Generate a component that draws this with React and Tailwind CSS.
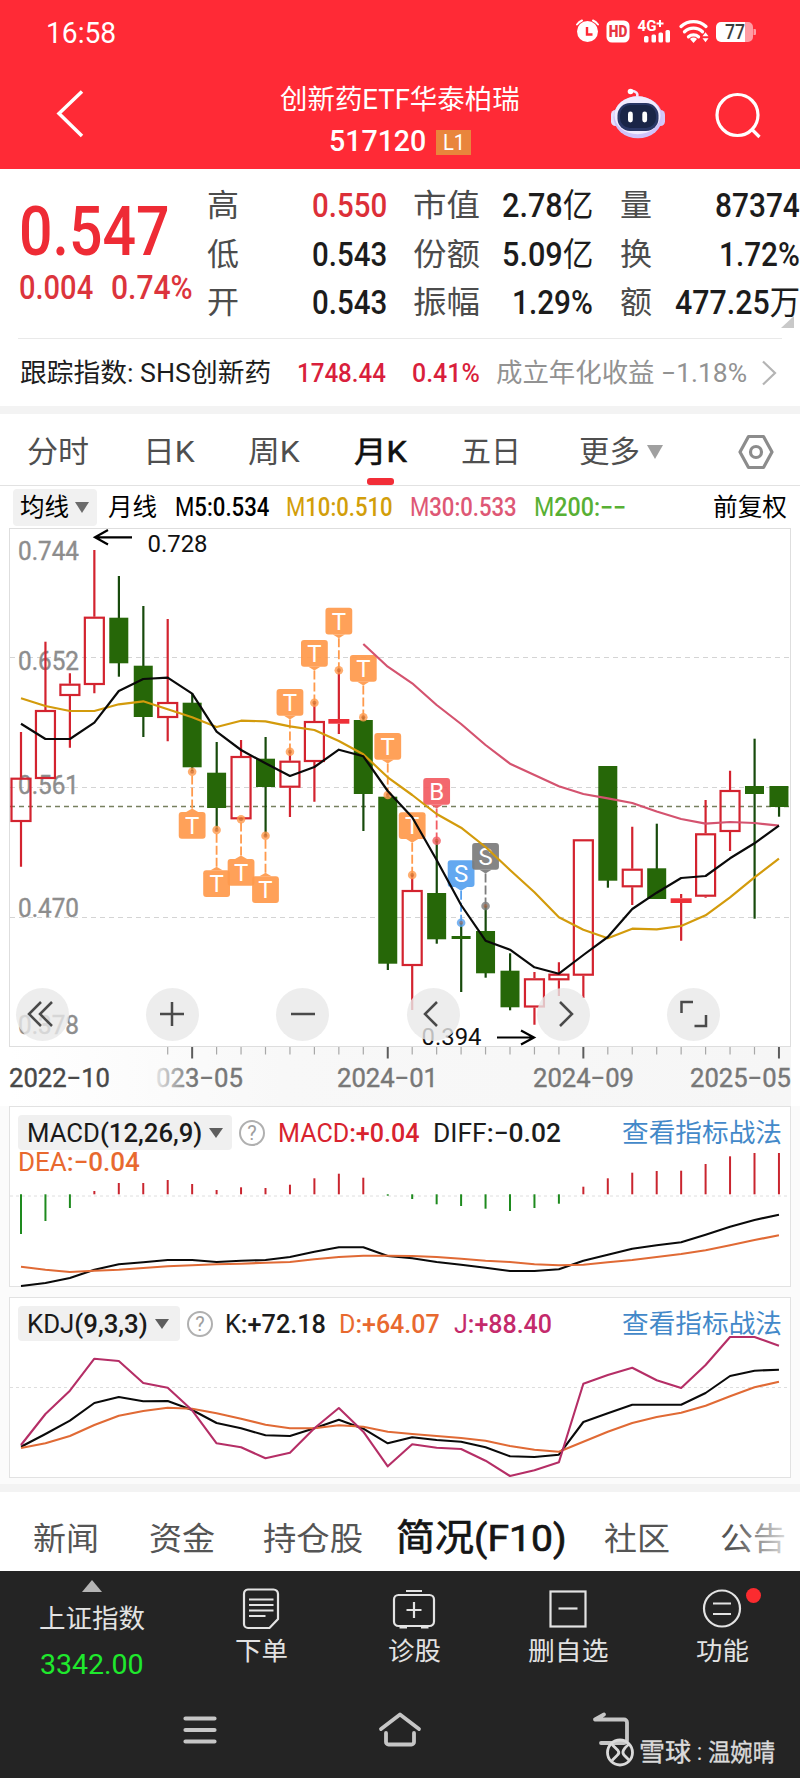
import { useLayoutEffect, useRef, useState } from "react";

const STEP = 24.45;
const xAt = (i) => 21 + i * STEP;

const RED = "#d3232f";
const GREEN = "#266708";

// [up, high, bodyTop, bodyBottom, low]
const CANDLES = [
  [1, 732, 777.7, 822, 866.7],
  [1, 641.7, 710, 779, 779],
  [1, 673.3, 683.7, 696, 747.7],
  [1, 550, 616.7, 685, 693.3],
  [0, 576, 617.7, 663.3, 676.7],
  [0, 606, 665.7, 717, 737],
  [1, 619, 702, 718, 741.3],
  [0, 693.3, 702.7, 767.3, 771],
  [0, 742, 772.7, 808, 829.3],
  [1, 740, 756, 819.3, 819.3],
  [0, 737, 758.7, 787, 835.7],
  [1, 751.7, 760.7, 787.7, 817],
  [1, 702.7, 721, 762, 801.7],
  [1, 670.3, 719, 723.7, 734],
  [0, 716.7, 720, 794, 831],
  [0, 796.7, 796.7, 963.7, 970],
  [1, 875, 890, 966, 1010],
  [0, 841, 893, 939.3, 943.7],
  [0, 922.7, 936, 939, 992],
  [0, 906, 931, 973.3, 977.7],
  [0, 953.3, 970.7, 1007.3, 1010.3],
  [1, 972, 978.3, 1007.5, 1024.7],
  [1, 962.3, 973.7, 980.3, 996],
  [1, 839.3, 839.3, 975.7, 998],
  [0, 766, 766, 880.7, 887.7],
  [1, 826.7, 868.7, 887.3, 905],
  [0, 823.7, 868.3, 899, 899],
  [1, 894, 898.3, 903, 940.7],
  [1, 800, 833.3, 896.7, 897.7],
  [1, 770.7, 790, 832, 851],
  [0, 738.7, 786, 794, 918.7],
  [0, 786, 786, 807, 816.7],
];

const MA5 = [723.7, 739, 739, 722.7, 691, 679, 677.7, 693.7, 731.7, 750, 763.3, 776, 767, 749.7, 756.3, 791, 817.3, 860, 905, 940.7, 949.7, 967.3, 973.7, 955, 937, 909, 892.7, 878, 876, 858.3, 843.3, 825.7];
const MA10 = [698.3, 706, 711, 711, 704.3, 701.3, 709.3, 717.3, 727, 720.7, 721.3, 726.3, 730, 741, 754.3, 777.3, 795, 814, 827.7, 847, 870, 892.3, 917.3, 929.7, 938.3, 928.7, 929.3, 926, 915.3, 897.3, 877.3, 858.7];
const MA30 = [644, 666.7, 683.3, 705, 724, 745, 763.7, 775, 786.3, 794, 798.3, 803, 811.5, 819, 823.7, 822, 823, 825.7];

const MACD_BARS = [1234, 1221, 1208, 1191, 1183, 1183, 1180, 1184, 1190, 1187.3, 1188, 1184.7, 1178.3, 1173.7, 1177.7, 1195.7, 1199, 1204.3, 1206, 1208.7, 1211, 1208, 1203.7, 1186.7, 1178.3, 1172.7, 1171, 1170.7, 1164, 1156.3, 1153, 1153];
const DIFF = [1286, 1283, 1278, 1269.7, 1264.3, 1262.3, 1260, 1260, 1262, 1260.7, 1260, 1257, 1251.7, 1247.3, 1247.3, 1256, 1258.3, 1262, 1264.7, 1267.7, 1271, 1271, 1269.3, 1260.7, 1254.7, 1248.7, 1245.3, 1242.3, 1234.7, 1226.7, 1220, 1214.7];
const DEA = [1266.7, 1269.7, 1272, 1270.7, 1269.7, 1268, 1266.3, 1265.3, 1264.3, 1263.7, 1262.7, 1262, 1259.3, 1257, 1255.7, 1255.7, 1256, 1257, 1258.7, 1260.7, 1262, 1264.3, 1265.3, 1264.7, 1262.3, 1260, 1257, 1254, 1250.3, 1245.3, 1240, 1235.3];

const K = [1446.7, 1434, 1420.7, 1403, 1397, 1401.3, 1401, 1410, 1423, 1428.3, 1435.3, 1436, 1428.3, 1419.7, 1428.7, 1443.3, 1437.3, 1440, 1441.7, 1447.3, 1456.3, 1457, 1454.7, 1422, 1413.3, 1404.7, 1404.7, 1404.7, 1393, 1376, 1370.7, 1369.7];
const D = [1448, 1443.3, 1436, 1425, 1415.7, 1411, 1407.7, 1408.7, 1413.3, 1418.7, 1424.7, 1428.3, 1428.3, 1425.3, 1426.7, 1431.7, 1434, 1436, 1438, 1440.7, 1446, 1449.7, 1451.7, 1441.7, 1431.7, 1423, 1417, 1412.7, 1405.7, 1396.3, 1387.3, 1381.7];
const J = [1445, 1414, 1390.7, 1358.7, 1361, 1383, 1387.7, 1410.3, 1443.3, 1447.3, 1458.3, 1452.7, 1428.3, 1408, 1431.7, 1466.3, 1444.3, 1447.7, 1449, 1460.7, 1476, 1470.3, 1462.3, 1383.7, 1375, 1367.7, 1380.3, 1388, 1365, 1337, 1337, 1345.7];

// [index, letter, boxTop, dotY, color]
const MARKERS = [
  [7, "T", 812, 771.7, "#ff9a4c"],
  [8, "T", 870.3, 830, "#ff9a4c"],
  [9, "T", 859, 819.3, "#ff9a4c"],
  [10, "T", 876.3, 835.7, "#ff9a4c"],
  [11, "T", 689, 751.7, "#ff9a4c"],
  [12, "T", 640, 702.7, "#ff9a4c"],
  [13, "T", 607.7, 670.3, "#ff9a4c"],
  [14, "T", 655, 717.3, "#ff9a4c"],
  [15, "T", 733, 795, "#ff9a4c"],
  [16, "T", 812.3, 875, "#ff9a4c"],
  [17, "B", 778, 840.7, "#f25c63"],
  [18, "S", 860.3, 922.7, "#57a1ef"],
  [19, "S", 843, 906, "#7c7c7c"],
];

const points = (values, start = 0) => values.map((y, i) => `${xAt(i + start)},${y}`).join(" ");

/** Squeezes or stretches one line of text to the width of its box */
function FitText({ className = "", children }) {
  const outer = useRef(null);
  const inner = useRef(null);
  const [scale, setScale] = useState(1);

  useLayoutEffect(() => {
    setScale(outer.current.clientWidth / inner.current.offsetWidth);
  }, [children]);

  return (
    <span ref={outer} className={`inline-flex shrink-0 items-center whitespace-nowrap leading-none ${className}`}>
      <span ref={inner} className="block shrink-0 origin-left" style={{ transform: `scaleX(${scale})` }}>
        {children}
      </span>
    </span>
  );
}

/** Light name followed by a heavier number, e.g. "M5" + ":0.534" */
function Reading({ name, value, className }) {
  return (
    <FitText className={className}>
      {name}
      <span className="font-medium">{value}</span>
    </FitText>
  );
}

function StatusIcons() {
  return (
    <svg className="absolute left-[570px] top-[14px]" width="190" height="34" viewBox="570 14 190 34">
      <g fill="#fff">
        <circle cx="587.5" cy="31.5" r="10.5" />
        <path d="M577 24.5a13 13 0 0 1 5-4M593 20.500a13 13 0 0 1 5 4" stroke="#fff" strokeWidth="2" fill="none" strokeLinecap="round" />
        <path d="M587 27v7.500h5.500" stroke="#ff2a36" strokeWidth="2.400" fill="none" />
        <rect x="606.500" y="20.500" width="23" height="22" rx="5.500" />
        <text x="608.800" y="37.300" textLength="18.500" lengthAdjust="spacingAndGlyphs" fontFamily="Roboto" fontWeight="900" fontSize="16" fill="#e8343f">HD</text>
        <text x="637.500" y="31" textLength="19" lengthAdjust="spacingAndGlyphs" fontFamily="Roboto" fontWeight="700" fontSize="15">4G</text>
        <path d="M660 20v7M656.500 23.500h7" stroke="#fff" strokeWidth="2" />
        <rect x="644" y="36" width="4.500" height="6.500" rx="1.500" />
        <rect x="651.500" y="34.500" width="4.500" height="8" rx="1.500" />
        <rect x="658.500" y="32.500" width="4.500" height="10" rx="1.500" />
        <rect x="665.500" y="30" width="4.500" height="12.500" rx="1.500" />
      </g>
      <g fill="none" stroke="#fff" strokeWidth="3.300" strokeLinecap="round">
        <path d="M681 26.500a18.500 18.500 0 0 1 25 0" />
        <path d="M684.500 31.800a13 13 0 0 1 18 0" />
        <path d="M688.500 36.800a7.500 7.500 0 0 1 10 0" />
      </g>
      <path d="M690 39l3.500 4 3.500-4a5 5 0 0 0-7 0z" fill="#fff" />
      <path d="M702.500 36.300l3-4 3 4zM702.500 38.200l3 4 3-4z" fill="#fff" />
      <path d="M744 22h4a5 5 0 0 1 5 5v10a5 5 0 0 1-5 5h-4zM753.500 29h1.500a1 1 0 0 1 1 1v4a1 1 0 0 1-1 1h-1.500z" fill="#ff9ba3" />
      <path d="M721 22h24v20h-24a5 5 0 0 1-5-5v-10a5 5 0 0 1 5-5z" fill="#fff" />
      <text x="725" y="39" textLength="20" lengthAdjust="spacingAndGlyphs" fontFamily="Roboto" fontWeight="500" fontSize="19.500" fill="#3c3c3c">77</text>
    </svg>
  );
}

function Robot() {
  return (
    <svg width="56" height="52" viewBox="610 88 56 52">
      <path d="M637 97c1.500-4-1-5.500-6-6.500" stroke="#f3e9ff" strokeWidth="2.500" fill="none" />
      <circle cx="630.500" cy="91.500" r="2.800" fill="#fff" />
      <rect x="611" y="110" width="9" height="16" rx="4.500" fill="#e6dffc" />
      <rect x="656" y="110" width="9" height="16" rx="4.500" fill="#d3c9f9" />
      <ellipse cx="638" cy="117.300" rx="24.500" ry="21" fill="#cfc3fa" />
      <ellipse cx="637.500" cy="115.300" rx="23" ry="19" fill="#f1ecff" />
      <rect x="617.500" y="103" width="41" height="28" rx="12.500" fill="#2a3766" />
      <rect x="620" y="105" width="36" height="23" rx="10" fill="#1a2547" />
      <rect x="628" y="111.500" width="4.800" height="11" rx="2.400" fill="#fff" />
      <rect x="642.300" y="111.500" width="4.800" height="11" rx="2.400" fill="#fff" />
    </svg>
  );
}

function Header() {
  return (
    <header className="relative h-[169px] bg-[#ff2a36] text-white">
      <div className="flex h-[66px] items-center pl-[46px]">
        <FitText className="w-[70px] text-[29px]">16:58</FitText>
        <StatusIcons />
      </div>
      <div className="flex h-[103px] items-start">
        <svg className="ml-[54px] mt-[22px]" width="32" height="52" viewBox="54 88 32 52">
          <path d="M82 91.500L59 113.500L82 136" stroke="#fff" strokeWidth="3.500" fill="none" />
        </svg>
        <div className="ml-[194px] mt-[17px] flex w-[240px] flex-col items-center">
          <FitText className="h-[34px] w-[240px] text-[27px]">创新药ETF华泰柏瑞</FitText>
          <div className="mt-[12px] flex items-center gap-[10px]">
            <FitText className="-mt-[3px] w-[97px] text-[30px] font-medium">517120</FitText>
            <span className="flex h-[25px] w-[35px] items-center justify-center bg-[#e9853c]">
              <FitText className="w-[22px] text-[22px]">L1</FitText>
            </span>
          </div>
        </div>
        <div className="ml-[90px] mt-[22px]">
          <Robot />
        </div>
        <svg className="ml-[45px] mt-[24px]" width="52" height="52" viewBox="710 90 52 52">
          <circle cx="736.500" cy="115" r="20.500" stroke="#fff" strokeWidth="3.200" fill="none" />
          <path d="M750.500 129l8 8" stroke="#fff" strokeWidth="3.200" />
        </svg>
      </div>
    </header>
  );
}

function QuoteRow({ label, labelClass, value, unit, valueClass }) {
  return (
    <div className="flex h-[48.5px] items-center justify-between">
      <FitText className={`text-[31px] text-[#4c4c4c] ${labelClass}`}>{label}</FitText>
      <FitText className={`text-[33px] font-medium ${valueClass}`}>
        {value}
        {unit && <span className="font-normal">{unit}</span>}
      </FitText>
    </div>
  );
}

function Quote() {
  return (
    <section className="bg-white text-[#1c1c1c]">
      <div className="relative flex h-[169px] items-start pt-[12px]">
        <div className="flex w-[207px] flex-col pl-[19px] pt-[17px]">
          <FitText className="h-[68px] w-[151px] text-[68px] font-medium text-[#ee2b35]">0.547</FitText>
          <div className="mt-[5px] flex gap-[18px] text-[33px] font-medium text-[#dc343c]">
            <FitText className="w-[74px]">0.004</FitText>
            <FitText className="w-[82px]">0.74%</FitText>
          </div>
        </div>
        <div className="w-[180px] pt-[0.5px]">
          <QuoteRow label="高" labelClass="w-[32px]" value="0.550" valueClass="w-[75px] text-[#dc2f38]" />
          <QuoteRow label="低" labelClass="w-[32px]" value="0.543" valueClass="w-[75px]" />
          <QuoteRow label="开" labelClass="w-[32px]" value="0.543" valueClass="w-[75px]" />
        </div>
        <div className="ml-[26px] w-[180px] pt-[0.5px]">
          <QuoteRow label="市值" labelClass="w-[67px]" value="2.78" unit="亿" valueClass="w-[91px]" />
          <QuoteRow label="份额" labelClass="w-[67px]" value="5.09" unit="亿" valueClass="w-[91px]" />
          <QuoteRow label="振幅" labelClass="w-[67px]" value="1.29%" valueClass="w-[81px]" />
        </div>
        <div className="ml-[27px] w-[180px] pt-[0.5px]">
          <QuoteRow label="量" labelClass="w-[32px]" value="87374" valueClass="w-[85px]" />
          <QuoteRow label="换" labelClass="w-[32px]" value="1.72%" valueClass="w-[81px]" />
          <QuoteRow label="额" labelClass="w-[32px]" value="477.25" unit="万" valueClass="w-[125px]" />
        </div>
        <svg className="absolute bottom-[10px] right-[6px]" width="13" height="12" viewBox="0 0 13 12">
          <path d="M13 0V12H0z" fill="#c9c9c9" />
        </svg>
      </div>
      <div className="ml-[18px] mr-[18px] border-t border-[#e9e9e9]" />
      <div className="flex h-[67px] items-center pl-[20px] text-[26px]">
        <FitText className="w-[251px]">跟踪指数: SHS创新药</FitText>
        <FitText className="ml-[26px] w-[89px] font-medium text-[#d91f3c]">1748.44</FitText>
        <FitText className="ml-[26px] w-[68px] font-medium text-[#d91f3c]">0.41%</FitText>
        <FitText className="ml-[16px] w-[251px] text-[#929292]">成立年化收益 −1.18%</FitText>
        <svg className="ml-[14px]" width="18" height="26" viewBox="0 0 18 26">
          <path d="M2 1.500L14 13L2 24.500" stroke="#b4b4b4" strokeWidth="2.200" fill="none" />
        </svg>
      </div>
      <div className="h-[8px] bg-[#f3f3f3]" />
    </section>
  );
}

function PeriodTabs() {
  return (
    <nav className="relative flex h-[72px] items-center border-b border-[#e2e2e2] bg-white pl-[27px] pt-[4px] text-[30px] text-[#4f4f4f]">
      <FitText className="w-[62px]">分时</FitText>
      <FitText className="ml-[54px] w-[52px]">日K</FitText>
      <FitText className="ml-[53px] w-[52px]">周K</FitText>
      <FitText className="ml-[54px] w-[53px] text-[#111] [-webkit-text-stroke:0.6px]">月K</FitText>
      <FitText className="ml-[54px] w-[60px]">五日</FitText>
      <FitText className="ml-[58px] w-[61px]">更多</FitText>
      <svg className="ml-[6px]" width="18" height="14" viewBox="0 0 18 14">
        <path d="M1 0H17L9 14z" fill="#a0a0a0" />
      </svg>
      <svg className="ml-[73px]" width="38" height="36" viewBox="0 0 38 36">
        <path d="M11.500 2.500H26.500L35 18L26.500 33.500H11.500L3 18z" stroke="#8c8c8c" strokeWidth="3.200" strokeLinejoin="round" fill="none" />
        <circle cx="19" cy="18" r="5.500" stroke="#8c8c8c" strokeWidth="3.200" fill="none" />
      </svg>
      <span className="absolute bottom-0 left-[367px] h-[7px] w-[27px] rounded-[3px] bg-[#f22d37]" />
    </nav>
  );
}

function MaLegend() {
  return (
    <div className="flex h-[42px] items-center bg-white pl-[13px] pt-[1px] text-[25px] text-black">
      <div className="flex h-[37px] w-[84px] items-center rounded bg-[#f1f1f1] pl-[7px]">
        <FitText className="w-[49px]">均线</FitText>
        <svg className="ml-[6px]" width="14" height="11" viewBox="0 0 14 11">
          <path d="M0 0H14L7 11z" fill="#6b6b6b" />
        </svg>
      </div>
      <FitText className="ml-[11px] w-[49px]">月线</FitText>
      <Reading name="M" value="5:0.534" className="ml-[18px] w-[94px]" />
      <Reading name="M" value="10:0.510" className="ml-[17px] w-[107px] text-[#d29e0a]" />
      <Reading name="M" value="30:0.533" className="ml-[17px] w-[107px] text-[#de5875]" />
      <Reading name="M" value="200:−−" className="ml-[17px] w-[92px] text-[#58b034]" />
      <FitText className="ml-[87px] w-[74px]">前复权</FitText>
    </div>
  );
}

function Candle({ index, data }) {
  const [up, high, top, bottom, low] = data;
  const x = xAt(index);
  const height = bottom - top;
  if (up) {
    return (
      <g stroke={RED} strokeWidth="2.200" fill="none">
        <path d={`M${x} ${high}V${top}M${x} ${bottom}V${low}`} />
        {height < 5 ? (
          <rect x={x - 10.5} y={top} width="21" height={height} fill="#ee3038" stroke="none" />
        ) : (
          <rect x={x - 9.5} y={top + 1} width="19" height={height - 2} />
        )}
      </g>
    );
  }
  return (
    <g fill={GREEN}>
      <rect x={x - 1} y={high} width="2.2" height={low - high} fill="#174a0c" />
      <rect x={x - 9.5} y={top} width="19" height={height} />
    </g>
  );
}

function Marker({ data }) {
  const [index, letter, top, dot, color] = data;
  const x = xAt(index);
  const below = dot < top;
  const tip = below ? top - 3.5 : top + 30.5;
  return (
    <g>
      <path d={`M${x} ${tip}V${dot}`} stroke={color} strokeWidth="1.8" strokeDasharray="9 3" />
      <circle cx={x} cy={dot} r="4.3" fill={color} fillOpacity="0.8" />
      <circle cx={x} cy={dot} r="2" fill="#b4511c" fillOpacity="0.45" />
      <g fill={color} fillOpacity="0.93">
        <rect x={x - 13.4} y={top} width="26.8" height="26.8" rx="3" />
        {below ? (
          <path d={`M${x - 6} ${top}L${x} ${tip}L${x + 6} ${top}z`} />
        ) : (
          <path d={`M${x - 6} ${top + 26.8}L${x} ${tip}L${x + 6} ${top + 26.8}z`} />
        )}
      </g>
      <text x={x} y={top + 22} textAnchor="middle" fontSize="24" fill="#fff">
        {letter}
      </text>
    </g>
  );
}

function RoundButton({ children }) {
  return (
    <button type="button" className="flex h-[53px] w-[53px] shrink-0 items-center justify-center rounded-full bg-[#e9e9e9]/80">
      <svg width="30" height="30" viewBox="0 0 30 30" fill="none" stroke="#4a4a4a" strokeWidth="2.500">
        {children}
      </svg>
    </button>
  );
}

function PriceChart() {
  return (
    <div className="relative h-[578px] bg-white">
      <svg className="block" width="800" height="578" viewBox="0 528 800 578" fontFamily='Roboto, "Noto Sans CJK SC", sans-serif'>
        <defs>
          <linearGradient id="axis" x1="0" y1="0" x2="1" y2="0">
            <stop offset="0" stopColor="#fff" />
            <stop offset="0.35" stopColor="#f8f8f8" />
            <stop offset="1" stopColor="#f6f6f6" />
          </linearGradient>
          <linearGradient id="fade" x1="0" y1="0" x2="1" y2="0">
            <stop offset="0" stopColor="#fbfbfb" />
            <stop offset="1" stopColor="#fbfbfb" stopOpacity="0" />
          </linearGradient>
        </defs>
        <rect x="9" y="1047" width="782" height="59" fill="url(#axis)" />
        <rect x="9.500" y="528.500" width="781" height="518" fill="none" stroke="#dedede" />

        <g stroke="#d4d4d4" strokeDasharray="5 4">
          <path d="M10 657.500H790" />
          <path d="M10 787.500H790" />
          <path d="M10 917.500H790" />
        </g>
        <path d="M10 806.500H790" stroke="#77805f" strokeWidth="1.300" strokeDasharray="5 4" />

        <g fill="#8d8d8d" stroke="#8d8d8d" strokeWidth="0.4" fontSize="25.500">
          <text x="18" y="559.500" textLength="61" lengthAdjust="spacingAndGlyphs">0.744</text>
          <text x="18" y="670" textLength="61" lengthAdjust="spacingAndGlyphs">0.652</text>
          <text x="18" y="793.500" textLength="61" lengthAdjust="spacingAndGlyphs">0.561</text>
          <text x="18" y="917" textLength="61" lengthAdjust="spacingAndGlyphs">0.470</text>
          <text x="18" y="1034" textLength="61" lengthAdjust="spacingAndGlyphs">0.378</text>
        </g>

        {CANDLES.map((data, i) => (
          <Candle key={i} index={i} data={data} />
        ))}
        {MARKERS.map((data) => (
          <Marker key={data[0]} data={data} />
        ))}

        <g fill="none" strokeWidth="2.200" strokeLinejoin="round">
          <polyline points={points(MA30, 14)} stroke="#d4536f" />
          <polyline points={points(MA10)} stroke="#d39b0c" />
          <polyline points={points(MA5)} stroke="#0a0a0a" />
        </g>

        <g fontSize="23" fill="#111">
          <text x="147.500" y="551.500" textLength="60" lengthAdjust="spacingAndGlyphs">0.728</text>
          <text x="421.500" y="1044.500" textLength="60" lengthAdjust="spacingAndGlyphs">0.394</text>
        </g>
        <g stroke="#000" strokeWidth="2.200" fill="none">
          <path d="M132 537.300H95M108 530L95 537.300L108 544.500" />
          <path d="M497 1037.500H534M521 1030.500L534 1037.500L521 1044.500" />
        </g>

        {CANDLES.map((_, i) => {
          if (i < 6) return null;
          const major = i % 8 === 7;
          return (
            <path
              key={i}
              d={`M${xAt(i)} 1047V${major ? 1058.5 : 1054.5}`}
              stroke={major ? "#5c5c5c" : "#a8a8a8"}
              strokeWidth={major ? 2 : 1.2}
            />
          );
        })}

        <g fontSize="26" fill="#777" strokeWidth="0.400">
          <text x="156" y="1086.500" textLength="87" lengthAdjust="spacingAndGlyphs" stroke="#777">023−05</text>
          <text x="337" y="1086.500" textLength="101" lengthAdjust="spacingAndGlyphs" stroke="#777">2024−01</text>
          <text x="533" y="1086.500" textLength="101" lengthAdjust="spacingAndGlyphs" stroke="#777">2024−09</text>
          <text x="690" y="1086.500" textLength="101" lengthAdjust="spacingAndGlyphs" stroke="#777">2025−05</text>
          <rect x="148" y="1060" width="44" height="34" fill="url(#fade)" />
          <text x="9" y="1086.500" textLength="101" lengthAdjust="spacingAndGlyphs" fill="#484848" stroke="#484848">2022−10</text>
        </g>
      </svg>
      <div className="absolute left-[15.500px] top-[459.500px] flex gap-[77.400px]">
        <RoundButton>
          <path d="M14 3L2 15L14 27M25 3L13 15L25 27" />
        </RoundButton>
        <RoundButton>
          <path d="M15 3V27M3 15H27" />
        </RoundButton>
        <RoundButton>
          <path d="M3 15H27" />
        </RoundButton>
        <RoundButton>
          <path d="M19 3L7 15L19 27" />
        </RoundButton>
        <RoundButton>
          <path d="M11 3L23 15L11 27" />
        </RoundButton>
        <RoundButton>
          <path d="M2.500 14V3H14M27 16V27H15.500" />
        </RoundButton>
      </div>
    </div>
  );
}

function IndicatorChip({ name, params, chipClass, textClass }) {
  return (
    <div className={`flex items-center rounded bg-[#f0f0f0] pl-[9px] ${chipClass}`}>
      <Reading name={name} value={params} className={`text-[26px] text-[#1a1a1a] ${textClass}`} />
      <svg className="ml-[7px]" width="14" height="10" viewBox="0 0 14 10">
        <path d="M0 0H14L7 10z" fill="#5e5e5e" />
      </svg>
    </div>
  );
}

function HelpIcon({ className }) {
  return (
    <span className={`flex h-[26px] w-[26px] shrink-0 items-center justify-center rounded-full border-2 border-[#b0b0b0] text-[20px] leading-none text-[#a0a0a0] ${className}`}>
      ?
    </span>
  );
}

function MacdPanel() {
  return (
    <section className="relative mx-[9px] h-[181px] border border-[#e2e2e2] bg-white">
      <svg className="absolute -left-[10px] -top-px" width="800" height="181" viewBox="0 1106 800 181">
        <path d="M10 1196H790" stroke="#dedede" strokeDasharray="3 3" />
        {MACD_BARS.map((y, i) => (
          <path key={i} d={`M${xAt(i)} 1194.300V${y}`} stroke={y > 1194.3 ? "#1e8a1e" : "#c9252f"} strokeWidth="2" />
        ))}
        <g fill="none" strokeWidth="2.100" strokeLinejoin="round">
          <polyline points={points(DIFF)} stroke="#0a0a0a" />
          <polyline points={points(DEA)} stroke="#e06a35" />
        </g>
      </svg>
      <div className="relative flex h-[51px] items-center pl-[8px] text-[26px]">
        <IndicatorChip name="MACD" params="(12,26,9)" chipClass="h-[35px] w-[214px]" textClass="w-[175px]" />
        <HelpIcon className="ml-[7px]" />
        <Reading name="MACD" value=":+0.04" className="ml-[13px] w-[142px] text-[#d8232f]" />
        <Reading name="DIFF" value=":−0.02" className="ml-[13px] w-[128px] text-[#1c1c1c]" />
        <FitText className="ml-[61px] w-[160px] text-[#4389c9]">查看指标战法</FitText>
      </div>
      <Reading name="DEA" value=":−0.04" className="absolute left-[8px] top-[42px] w-[122px] text-[26px] text-[#e8692f]" />
    </section>
  );
}

function KdjPanel() {
  return (
    <section className="relative mx-[9px] mt-[10px] h-[181px] border border-[#e2e2e2] bg-white">
      <div className="relative flex h-[51px] items-center pl-[8px] text-[26px]">
        <IndicatorChip name="KDJ" params="(9,3,3)" chipClass="h-[35px] w-[162px]" textClass="w-[121px]" />
        <HelpIcon className="ml-[7px]" />
        <Reading name="K" value=":+72.18" className="ml-[12px] w-[101px] text-[#1c1c1c]" />
        <Reading name="D" value=":+64.07" className="ml-[13px] w-[101px] text-[#e8692f]" />
        <Reading name="J" value=":+88.40" className="ml-[14px] w-[98px] text-[#c42a6b]" />
        <FitText className="ml-[70px] w-[160px] text-[#4389c9]">查看指标战法</FitText>
      </div>
      <svg className="absolute -left-[10px] -top-px" width="800" height="181" viewBox="0 1297 800 181">
        <path d="M10 1387.500H790" stroke="#dedede" strokeDasharray="3 3" />
        <g fill="none" strokeWidth="2.100" strokeLinejoin="round">
          <polyline points={points(K)} stroke="#0a0a0a" />
          <polyline points={points(D)} stroke="#e06a35" />
          <polyline points={points(J)} stroke="#b52e66" />
        </g>
      </svg>
    </section>
  );
}

function InfoTabs() {
  return (
    <nav className="relative flex h-[79px] items-center bg-white pl-[33px] pt-[14px] text-[32px] text-[#555]">
      <FitText className="w-[66px]">新闻</FitText>
      <FitText className="ml-[50px] w-[66px]">资金</FitText>
      <FitText className="ml-[48px] w-[100px]">持仓股</FitText>
      <FitText className="ml-[33px] w-[171px] text-[37px] text-[#151515] [-webkit-text-stroke:0.7px]">简况(F10)</FitText>
      <FitText className="ml-[37px] w-[66px]">社区</FitText>
      <FitText className="ml-[50px] w-[66px]">公告</FitText>
      <span className="absolute right-0 top-0 h-full w-[66px] bg-linear-to-r from-white/0 to-white" />
    </nav>
  );
}

function BottomItem({ icon, label, itemClass, labelClass }) {
  return (
    <div className={`flex shrink-0 flex-col items-center ${itemClass}`}>
      <svg width="48" height="46" viewBox="0 0 48 46" fill="none" stroke="#e3e3e3" strokeWidth="2.200">
        {icon}
      </svg>
      <FitText className={`mt-[4px] h-[32px] text-[25.500px] ${labelClass}`}>{label}</FitText>
    </div>
  );
}

function BottomBar() {
  return (
    <footer className="relative h-[207px] bg-[#242424] text-[#e2e2e2]">
      <div className="flex h-[125px] items-start">
        <div className="flex w-[184px] flex-col items-center pt-[9px]">
          <svg width="20" height="12" viewBox="0 0 20 12">
            <path d="M10 0L20 12H0z" fill="#b5b5b5" />
          </svg>
          <FitText className="mt-[11px] h-[32px] w-[106px] text-[26px]">上证指数</FitText>
          <FitText className="mt-[14px] h-[32px] w-[104px] text-[28.500px] text-[#1fe92d]">3342.00</FitText>
        </div>
        <BottomItem
          itemClass="ml-[37px] mt-[15px] w-[80px]"
          labelClass="w-[53px]"
          label="下单"
          icon={
            <>
              <path d="M11 3.500H36.500a4.500 4.500 0 0 1 4.500 4.500V33L32.500 42H11a4 4 0 0 1-4-4V8a4.500 4.500 0 0 1 4-4.500z" />
              <path d="M12 13.500H36.500M12 19H36.500M12 24.500H36.500M12 30H28.500" />
            </>
          }
        />
        <BottomItem
          itemClass="ml-[73px] mt-[15px] w-[80px]"
          labelClass="w-[53px]"
          label="诊股"
          icon={
            <>
              <rect x="4" y="9" width="40" height="31" rx="4.500" />
              <path d="M16 5H32M24 16V32M16.500 24H31.500" />
              <path d="M9.500 41.500H17M31 41.500H38.500" />
            </>
          }
        />
        <BottomItem
          itemClass="ml-[74px] mt-[15px] w-[80px]"
          labelClass="w-[81px]"
          label="删自选"
          icon={
            <>
              <rect x="6.500" y="5.500" width="35" height="35" />
              <path d="M14.500 22.500H33.500" />
            </>
          }
        />
        <div className="relative">
          <BottomItem
            itemClass="ml-[74px] mt-[15px] w-[80px]"
            labelClass="w-[53px]"
            label="功能"
            icon={
              <>
                <circle cx="24" cy="22.500" r="18" />
                <path d="M15 17.500H33M15 28H33" />
              </>
            }
          />
          <span className="absolute left-[138px] top-[17px] h-[15px] w-[15px] rounded-full bg-[#fb2b2f]" />
        </div>
      </div>
      <div className="flex h-[66px] items-center pl-[175px]">
        <svg width="50" height="36" viewBox="0 0 50 36" stroke="#c6c6c6" strokeWidth="4.200" strokeLinecap="round">
          <path d="M10.500 7.500H39.500M10.500 19H39.500M10.500 30.500H39.500" />
        </svg>
        <svg className="ml-[150px]" width="50" height="36" viewBox="0 0 50 36" fill="none" stroke="#c6c6c6" strokeWidth="3.800" strokeLinecap="round" strokeLinejoin="round">
          <path d="M6 18L25 3.500L44 18M11 22V31a2.500 2.500 0 0 0 2.500 2.500H36.500a2.500 2.500 0 0 0 2.500-2.500V22" />
        </svg>
        <svg className="ml-[161px]" width="50" height="36" viewBox="0 0 50 36" fill="none" stroke="#c6c6c6" strokeWidth="3.800" strokeLinecap="round" strokeLinejoin="round">
          <path d="M18 3.500L9 8.500H38a3 3 0 0 1 3 3V29a3 3 0 0 1-3 3H15" />
        </svg>
      </div>
      <div className="absolute left-[606px] top-[167px] flex items-center text-[#dadada]">
        <svg width="28" height="29" viewBox="0 0 28 29" fill="none" stroke="#dadada" strokeWidth="2.800">
          <circle cx="14" cy="14.500" r="12.500" />
          <path d="M6 6.500L12 12.500Q14 15 11 17.500L6 22.500M22.500 6.500Q14.500 13 18 17L23 22" />
        </svg>
        <FitText className="ml-[5px] w-[52px] text-[25px] [-webkit-text-stroke:0.4px]">雪球</FitText>
        <span className="w-[17px] text-center text-[23px] leading-none">:</span>
        <FitText className="w-[67px] text-[24px] [-webkit-text-stroke:0.4px]">温婉晴</FitText>
      </div>
    </footer>
  );
}

export default function App() {
  return (
    <div className="h-[1778px] w-[800px] overflow-hidden bg-[#fbfbfb] font-[Roboto,'Noto_Sans_CJK_SC',sans-serif]">
      <Header />
      <Quote />
      <PeriodTabs />
      <MaLegend />
      <PriceChart />
      <MacdPanel />
      <KdjPanel />
      <div className="h-[6px]" />
      <div className="h-[8px] bg-[#f3f3f3]" />
      <InfoTabs />
      <BottomBar />
    </div>
  );
}
